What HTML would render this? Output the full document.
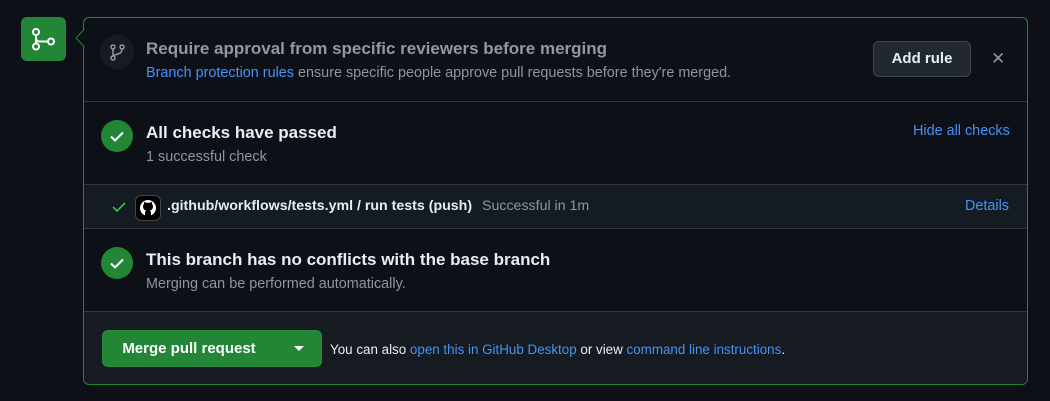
<!DOCTYPE html>
<html><head><style>
body{margin:0;background:#0d1117;width:1050px;height:401px;overflow:hidden;font-family:"Liberation Sans",sans-serif;color:#e6edf3;position:relative}
.abs{position:absolute}
a{color:#4493f8;text-decoration:none}
.box{left:83px;top:17px;width:943px;height:366px;border:1px solid #238636;border-radius:6px;overflow:hidden}
.sep{position:absolute;left:0;right:0;height:1px;background:#30363d}
.chk{width:32px;height:32px;border-radius:50%;background:#238636}
.muted{color:#8d96a0}
</style></head><body>
<div class="abs" style="left:21px;top:17px;width:45px;height:44px;background:#238636;border-radius:6px">
<svg width="45" height="44" viewBox="0 0 45 44"><g fill="none" stroke="#fff" stroke-width="2"><circle cx="15" cy="15" r="3"/><circle cx="15" cy="29.5" r="3"/><circle cx="30" cy="24.5" r="3"/><path d="M15 18v8.5M15 21q0 3.5 4 3.5h8"/></g></svg></div>
<svg class="abs" style="left:75px;top:29px;z-index:2" width="10" height="18"><path d="M9.5 0 L1 9 L9.5 18" fill="#0d1117" stroke="#238636"/></svg>
<div class="abs box">
 <div class="abs" style="left:16px;top:17px;width:34px;height:34px;border-radius:50%;background:#161b22">
 <svg width="34" height="34"><g fill="none" stroke="#8d96a0" stroke-width="1.5"><circle cx="13" cy="12" r="2"/><circle cx="13" cy="23" r="2"/><circle cx="22" cy="12" r="2"/><path d="M13 14v7M22 14q0 4-4 5t-5 2"/></g></svg></div>
 <div class="abs muted" style="left:62px;top:21px;font-size:17px;font-weight:bold;color:#9198a1">Require approval from specific reviewers before merging</div>
 <div class="abs muted" style="left:62px;top:47px;font-size:14.4px"><a>Branch protection rules</a> ensure specific people approve pull requests before they're merged.</div>
 <div class="abs" style="left:789px;top:23px;width:96px;height:34px;border:1px solid #3d444d;border-radius:6px;background:#212830;font-size:15px;font-weight:bold;line-height:34px;text-align:center">Add rule</div>
 <div class="abs muted" style="left:907px;top:31px;font-size:17px">✕</div>
 <div class="sep" style="top:83px"></div>
 <div class="abs chk" style="left:17px;top:102px"><svg width="32" height="32"><path d="M10 16.5l4 4 8-8" fill="none" stroke="#fff" stroke-width="2"/></svg></div>
 <div class="abs" style="left:62px;top:105px;font-size:17px;font-weight:bold">All checks have passed</div>
 <div class="abs muted" style="left:62px;top:131px;font-size:14.4px">1 successful check</div>
 <div class="abs" style="left:829px;top:105px;font-size:14.4px"><a>Hide all checks</a></div>
 <div class="sep" style="top:166px"></div>
 <div class="abs" style="left:0;top:167px;width:943px;height:43px;background:#151b23"></div>
 <svg class="abs" style="left:28px;top:183px" width="14" height="12"><path d="M1 6l4 4 8-8" fill="none" stroke="#3fb950" stroke-width="1.6"/></svg>
 <div class="abs" style="left:51px;top:177px;width:24px;height:24px;border-radius:6px;background:#000;border:1px solid #444"><svg width="24" height="24"><circle cx="12" cy="12" r="8" fill="#fff"/><path d="M9 20v-3q0-2 1.5-2.5Q7 14 7 10.5q0-1.5 1-2.5-.3-1 .1-2 1 0 2 .8h3.8q1-.8 2-.8.4 1 .1 2 1 1 1 2.5 0 3.5-3.5 4 1.5.5 1.5 2.5v3z" fill="#000"/></svg></div>
 <div class="abs" style="left:83px;top:180px;font-size:14.2px;font-weight:bold;color:#e6edf3">.github/workflows/tests.yml / run tests (push) <span class="muted" style="font-weight:normal;margin-left:6px">Successful in 1m</span></div>
 <div class="abs" style="left:881px;top:180px;font-size:14.4px"><a>Details</a></div>
 <div class="sep" style="top:210px"></div>
 <div class="abs chk" style="left:17px;top:229px"><svg width="32" height="32"><path d="M10 16.5l4 4 8-8" fill="none" stroke="#fff" stroke-width="2"/></svg></div>
 <div class="abs" style="left:62px;top:232px;font-size:17px;font-weight:bold">This branch has no conflicts with the base branch</div>
 <div class="abs muted" style="left:62px;top:258px;font-size:14.4px">Merging can be performed automatically.</div>
 <div class="sep" style="top:293px"></div>
 <div class="abs" style="left:0;top:294px;width:943px;height:72px;background:#161b22"></div>
 <div class="abs" style="left:18px;top:312px;width:218px;height:35px;border:1px solid #2a8a3c;border-radius:6px;background:#238636">
  <div class="abs" style="left:0;top:0;width:172px;height:35px;line-height:35px;text-align:center;font-size:15px;font-weight:bold;color:#fff">Merge pull request</div>
  <div class="abs" style="left:172px;top:0;width:1px;height:35px;background:#2f7d3c"></div>
  <div class="abs" style="left:191px;top:15px;width:0;height:0;border-left:5px solid transparent;border-right:5px solid transparent;border-top:5px solid #fff"></div>
 </div>
 <div class="abs" style="left:246px;top:324px;font-size:13.4px;color:#e6edf3">You can also <a>open this in GitHub Desktop</a> or view <a>command line instructions</a>.</div>
</div>
</body></html>
